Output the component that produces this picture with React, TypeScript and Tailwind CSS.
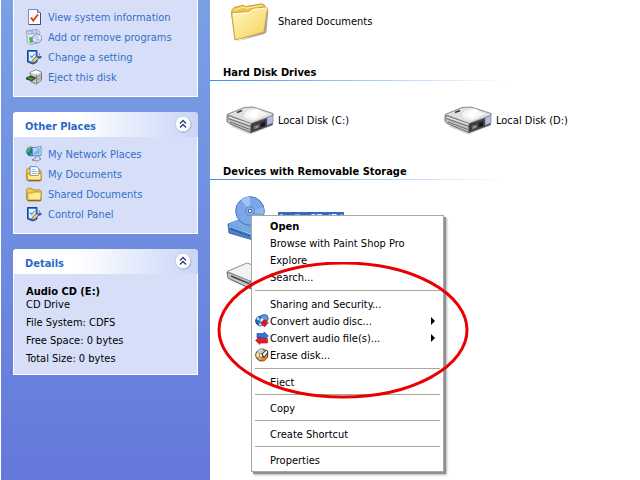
import React from "react";

function CheckPageIcon() {
  return (
    <svg viewBox="0 0 16 16" className="size-4 shrink-0" aria-hidden="true">
      <path d="M2.5.5h9l3 3v12h-12z" fill="#fdfdff" stroke="#6f8fc0" />
      <path d="M14.500 4v11.500H3" fill="none" stroke="#34507f" />
      <path d="M11.500.5v3h3" fill="#c3d3ee" stroke="#5f7fb0" />
      <path d="M5 8.500l2.200 3L12 5.500" fill="none" stroke="#e8401c" strokeWidth="2" />
    </svg>
  );
}

function ProgramsIcon() {
  return (
    <svg viewBox="0 0 16 16" className="size-4 shrink-0" aria-hidden="true">
      <path d="M.5 2L11 .5 14 3l-2 11-8 1.500L1.500 13z" fill="#dfe7f4" stroke="#90a4c6" />
      <path d="M1.500 2.500L11 1.500l1 3-9.500 1z" fill="#8fb2e4" />
      <path d="M3 3.500h2M7 3h3" stroke="#fff" />
      <path d="M3 8.500L7 8v5.500L4 14z" fill="#52ad4d" />
      <circle cx="11" cy="9.500" r="4.500" fill="#cdd6f2" stroke="#8492b8" />
      <path d="M11 9.500L14 6.500a4 4 0 0 1 1 3zM11 9.500l-3 3-1-3z" fill="#f4f8ff" />
      <circle cx="11" cy="9.500" r="1.300" fill="#fff" stroke="#8998c4" strokeWidth=".7" />
    </svg>
  );
}

function SettingIcon() {
  return (
    <svg viewBox="0 0 16 16" className="size-4 shrink-0" aria-hidden="true">
      <path d="M1.500 1.500h9.500v11.500l-4 2-5.500-2z" fill="#3f80d4" stroke="#1c4587" />
      <path d="M3 3h6.500v9L7 13l-4-1.500z" fill="#e9f3ff" />
      <path d="M4 6.500l1.700 2L8.500 5" fill="none" stroke="#5c93d6" strokeWidth="1.200" />
      <path d="M6 12.500l1.500-2.700L11 7.500l2 1.500-3.500 3.500-3 1.500z" fill="#f3c66a" stroke="#3f4f78" strokeWidth=".7" />
      <path d="M11 7.500l4.500-.8v2.300L12.500 10z" fill="#2b62b8" />
      <path d="M13.500 4.500v2" stroke="#d1603a" />
    </svg>
  );
}

function EjectIcon() {
  return (
    <svg viewBox="0 0 16 16" className="size-4 shrink-0" aria-hidden="true">
      <path d="M4 3.500L10 .8l5.500 2.400v8L10.500 15 5 13z" fill="#c9c9c7" stroke="#666" strokeWidth=".8" />
      <path d="M4.500 3.500L10 1.300l5 2.200-4.500 2z" fill="#fff" />
      <path d="M10.500 5.500v9M10.500 8.500l5-3M10.500 11.500l5-3M5 7l5.500 2" fill="none" stroke="#777" strokeWidth=".8" />
      <path d="M0 8.500L5 6.500l5.500 2.500L6 12.200 0 10.500z" fill="#3c403c" />
      <path d="M1 9.300l4.500 1.600 2.500-1.400-4-1.600z" fill="#3ea33b" />
    </svg>
  );
}

function NetworkIcon() {
  return (
    <svg viewBox="0 0 16 16" className="size-4 shrink-0" aria-hidden="true">
      <circle cx="5" cy="5.500" r="4.800" fill="#2465c2" />
      <path d="M1 3c2-3 4-3 5-2L4 4 3 7 1 6zM4 7l3 1-2 3z" fill="#53b646" />
      <path d="M6 2l9-1.500v9L7 10z" fill="#e5edf8" stroke="#56719f" strokeWidth=".8" />
      <path d="M7.300 3l6.400-1v6.300l-5.900.5z" fill="#69b9f4" />
      <path d="M8 3.400l4-.7-3.800 4z" fill="#bce6ff" />
      <path d="M10 10l3-.3.4 2.200 1.600 1.200-4 2-5-1.200 3.500-1.500z" fill="#d7dfee" stroke="#5f6e8d" strokeWidth=".7" />
    </svg>
  );
}

function SmallFolder({ page = false }: { page?: boolean }) {
  return (
    <svg viewBox="0 0 16 16" className="size-4 shrink-0" aria-hidden="true">
      <path d="M.6 13.500V3.500l1-1.200h4l1.400 1.600h7l1 1v9l-1 .9H1.600z" fill="#f3c94f" stroke="#b58a2c" strokeWidth=".9" />
      {page && (
        <>
          <path d="M4 .7h6.500L13 3v8H4z" fill="#fff" stroke="#4d83c2" strokeWidth=".9" />
          <path d="M5.500 3.500h4M5.500 5.500h6M5.500 7.500h6" stroke="#8fb8e6" />
        </>
      )}
      <path
        d={page ? "M1 7.500h2l1 2h8l1-2h2v6.500H1.600z" : "M2 14l-.4-7h5l1.200-1H15l.3 1-.8 7z"}
        fill="#ffe992"
        stroke="#b3851f"
        strokeWidth=".8"
      />
      <path d="M2 14.700h12.700l.7-1" fill="none" stroke="#6e5214" strokeWidth=".8" />
    </svg>
  );
}

function FolderIcon() {
  return (
    <svg viewBox="0 0 48 42" className="h-[42px] w-12 shrink-0" aria-hidden="true">
      <defs>
        <linearGradient id="folderFront" x1="0" y1="0" x2="1" y2="1">
          <stop offset="0" stopColor="#fffabf" />
          <stop offset="1" stopColor="#f6cf5c" />
        </linearGradient>
      </defs>
      <path d="M10 41.500l28.500-7.500 2-2 2-22-2 2-3 20z" fill="#8f8d89" opacity=".75" />
      <path d="M5.500 13l.7-3.500L8 7.500l9-2.200 2.500 1.200L36 3.800l2.500 1.500 1 3-2 23.500-28.500 8z" fill="#efc450" stroke="#b88a2a" strokeWidth=".8" />
      <path d="M7.200 10.500L17.500 7l2.500 1.200 16-2.700" fill="none" stroke="#fff2a8" />
      <path d="M9 40L5.800 14l1.400-1.500 15.300-.8 4.500-3.500L40.500 7l1 1.200L38 32z" fill="url(#folderFront)" stroke="#c99a35" strokeWidth=".8" />
      <path d="M7 14l16-1 4.500-3.500L40.500 8" fill="none" stroke="#fffde8" />
    </svg>
  );
}

function DriveIcon() {
  return (
    <svg viewBox="0 0 48 48" className="size-12 shrink-0" aria-hidden="true">
      <path d="M4 30l20 8.500 23-9-3-4z" fill="#77777d" opacity=".35" />
      <path d="M1 19.500l24 8v9L3 27.500l-2-2z" fill="#bfc0c2" stroke="#55565b" strokeWidth=".8" />
      <path d="M25 27.500l21.500-7v8L25 36.500z" fill="#3d3d46" stroke="#4a4b52" strokeWidth=".8" />
      <path d="M41 20l6-2.500v9.500l-6 2.500z" fill="#b8bce4" stroke="#6c6e91" strokeWidth=".6" />
      <path d="M1 18.500L18 11.500l9-.5 20 6.500v1.800L25 27.500z" fill="#dedfdf" stroke="#6f7075" strokeWidth=".8" />
      <path d="M18 18.500c2-5 9-7 17-3.500l7 2.800-13 6c-6 .5-10-1-11-5.300z" fill="#f5f5f5" />
      <path d="M22 19.500l8-7 5 2-6 8z" fill="#fff" />
      <path d="M11 16.500l5-2" stroke="#37373b" strokeWidth="1.400" />
      <path d="M2 22.500l23 8M4 26L24 33.500" stroke="#6d6e74" />
      <path d="M3 21l22 7.500" stroke="#f9f9f9" strokeWidth=".8" />
      <path d="M28 30l5-1.600v3.200l-5 1.800z" fill="#77778a" />
      <path d="M30 31h1.500" stroke="#e09240" strokeWidth="1.500" />
      <path d="M35 27l4-1.300v4l-4 1.300z" fill="#16161b" />
    </svg>
  );
}

function RemovableIcon() {
  return (
    <svg viewBox="0 0 48 48" className="size-12 shrink-0" aria-hidden="true">
      <path d="M3 29l22 9 21-8-4-5z" fill="#77777d" opacity=".35" />
      <path d="M1 21l24 9v8L2 27z" fill="#c6c6c8" stroke="#68686a" />
      <path d="M24 30l22-7v6l-22 8z" fill="#a3a3a5" stroke="#68686a" />
      <path d="M1 20.500L21 12l25 9-22 9z" fill="#f2f2f2" stroke="#8e8e90" />
      <path d="M5 25l18 7.500" stroke="#44454a" strokeWidth="1.500" />
    </svg>
  );
}

function DiscDriveIcon() {
  return (
    <svg viewBox="0 0 48 48" className="size-12 shrink-0" aria-hidden="true">
      <path d="M2 29l11-4 31 9-17 11L3 38z" fill="#4c84cb" stroke="#285592" strokeWidth=".8" />
      <path d="M2 29l11-4 31 9-18 5z" fill="#77a9e4" />
      <path d="M3 31l22 8" stroke="#a8cdf7" />
      <path d="M5 34l18 7" stroke="#244f8d" strokeWidth="1.500" strokeDasharray="2 1" />
      <circle cx="24" cy="16" r="14.300" fill="#7ba6e8" stroke="#4377bf" />
      <path d="M24 16L15 5a14 14 0 0 1 9-3.300zM24 16l9.500 10a14 14 0 0 1-8 4z" fill="#9fc3f5" />
      <path d="M24 16l13.500-3.500a14 14 0 0 1 0 7z" fill="#8fb7f0" />
      <circle cx="24" cy="16" r="4.300" fill="#8db5ee" stroke="#527fc5" />
      <circle cx="24" cy="16" r="1.800" fill="#fff" stroke="#295697" />
    </svg>
  );
}

function ConvertDiscIcon() {
  return (
    <svg viewBox="0 0 14 14" className="size-[14px]" aria-hidden="true">
      <circle cx="5.500" cy="7" r="4.800" fill="#2471bb" stroke="#163c6d" />
      <path d="M5.500 7L1 5l2.500-2.500zM5.500 7l2 4.500h-4z" fill="#a5d9ff" />
      <circle cx="9.300" cy="4.500" r="3.900" fill="#5c9ce0" stroke="#1e4b86" strokeWidth=".8" />
      <circle cx="7" cy="6" r="1.500" fill="#fff" />
      <path d="M8 6h3v2.500h2.500L9.500 13 5.500 8.500H8z" fill="#e9131d" stroke="#a80c18" strokeWidth=".5" />
    </svg>
  );
}

function ConvertFilesIcon() {
  return (
    <svg viewBox="0 0 14 14" className="size-[14px]" aria-hidden="true">
      <path d="M2 2.500h7V1l4.500 4L9 8.500V7H2z" fill="#2f74e2" stroke="#153e94" strokeWidth=".6" />
      <path d="M12.500 7.500H5v-2L.5 9.500 5 13.500V12h7.500z" fill="#e21b26" stroke="#9c1220" strokeWidth=".6" />
    </svg>
  );
}

function EraseIcon() {
  return (
    <svg viewBox="0 0 14 14" className="size-[14px]" aria-hidden="true">
      <circle cx="6.800" cy="7" r="6" fill="#e9ad55" stroke="#3c2c1e" />
      <path d="M7 7L2 3A6 6 0 0 1 8 1.200z" fill="#a8d9ee" />
      <path d="M7 7L1.500 5v4z" fill="#fff1bd" />
      <path d="M7 7l5.500 2A6 6 0 0 1 6 12.500z" fill="#ea8226" />
      <circle cx="6" cy="7.500" r="1.800" fill="#fff" stroke="#745838" strokeWidth=".7" />
      <path d="M7 6l2 3.500L13 4l-1.500-2z" fill="#fff" stroke="#222" />
    </svg>
  );
}

function CollapseButton({ label }: { label: string }) {
  return (
    <button aria-label={label} className="mb-[2px] size-[18px] shrink-0">
      <svg viewBox="0 0 18 18" className="size-[18px]" aria-hidden="true">
        <circle cx="9.500" cy="9.700" r="8" fill="#9aa6cb" />
        <circle cx="9" cy="9" r="7.700" fill="#fff" stroke="#c3cce6" strokeWidth=".8" />
        <path d="M6 8.500l3-3 3 3M6 12.500l3-3 3 3" fill="none" stroke="#24407e" strokeWidth="1.400" />
      </svg>
    </button>
  );
}

function PanelHeader({ title }: { title: string }) {
  return (
    <header className="flex h-[25px] items-center justify-between rounded-t-[3px] bg-linear-to-r from-white from-35% to-[#c8d5f7] pr-[6px] pl-3">
      <h2 className="pt-[3px] font-bold text-[#2a6acb]">{title}</h2>
      <CollapseButton label={"Collapse " + title} />
    </header>
  );
}

function TaskLink({ icon, children }: { icon: React.ReactNode; children: string }) {
  return (
    <li>
      <a href="#" className="flex h-5 items-center gap-[6px] text-[#346fcb]">
        {icon}
        <span>{children}</span>
      </a>
    </li>
  );
}

function GroupHeading({ children }: { children: string }) {
  return (
    <>
      <h2 className="pt-px pl-[13px] leading-[15px] font-bold">{children}</h2>
      <div className="h-px w-[296px] bg-linear-to-r from-[#3f8cf0] to-white" />
    </>
  );
}

function Item({ icon, label }: { icon: React.ReactNode; label?: React.ReactNode }) {
  return (
    <div className="flex items-center gap-1">
      {icon}
      {label && <span>{label}</span>}
    </div>
  );
}

type MenuItemProps = { icon?: React.ReactNode; children: string; bold?: boolean; submenu?: boolean };

function MenuItem({ icon, children, bold, submenu }: MenuItemProps) {
  return (
    <button role="menuitem" className="flex h-[17px] w-full items-center pr-2 pl-[3px] text-left">
      <span className="flex w-[15px] shrink-0 pt-px">{icon}</span>
      <span className={bold ? "flex-1 pt-[2px] font-bold" : "flex-1 pt-[2px]"}>{children}</span>
      {submenu && (
        <svg viewBox="0 0 4 8" className="h-2 w-1" aria-hidden="true">
          <path d="M0 0l4 4-4 4z" />
        </svg>
      )}
    </button>
  );
}

function Separator() {
  return <hr className="mx-[3px] my-1 border-t border-[#aca899]" />;
}

function ContextMenu() {
  return (
    <div
      role="menu"
      className="absolute top-[215px] left-[251px] w-[193px] border border-[#aca899] bg-white pt-px pb-[3px] shadow-[2px_2px_0_#8e8e98,3px_3px_2px_#b4b4bc]"
    >
      <div className="pb-px">
        <MenuItem bold>Open</MenuItem>
        <MenuItem>Browse with Paint Shop Pro</MenuItem>
        <MenuItem>Explore</MenuItem>
        <MenuItem>Search...</MenuItem>
      </div>
      <Separator />
      <div className="pb-px">
        <MenuItem>Sharing and Security...</MenuItem>
        <MenuItem icon={<ConvertDiscIcon />} submenu>Convert audio disc...</MenuItem>
        <MenuItem icon={<ConvertFilesIcon />} submenu>Convert audio file(s)...</MenuItem>
        <MenuItem icon={<EraseIcon />}>Erase disk...</MenuItem>
      </div>
      <Separator />
      <MenuItem>Eject</MenuItem>
      <Separator />
      <MenuItem>Copy</MenuItem>
      <Separator />
      <MenuItem>Create Shortcut</MenuItem>
      <Separator />
      <MenuItem>Properties</MenuItem>
    </div>
  );
}

export default function App() {
  return (
    <div className="relative flex min-h-screen overflow-hidden bg-white pl-px font-['Tahoma','DejaVu_Sans_Condensed','DejaVu_Sans',sans-serif] text-[11px] leading-[13px] text-black">
      <aside className="flex w-[209px] shrink-0 flex-col gap-[15px] bg-linear-to-b from-[#7aa0e6] to-[#6478db] px-3">
        <section className="border border-t-0 border-white bg-[#d6dff7] pt-[7px] pb-[9px] pl-3">
          <ul>
            <TaskLink icon={<CheckPageIcon />}>View system information</TaskLink>
            <TaskLink icon={<ProgramsIcon />}>Add or remove programs</TaskLink>
            <TaskLink icon={<SettingIcon />}>Change a setting</TaskLink>
            <TaskLink icon={<EjectIcon />}>Eject this disk</TaskLink>
          </ul>
        </section>
        <section>
          <PanelHeader title="Other Places" />
          <ul className="border border-t-0 border-white bg-[#d6dff7] pt-[7px] pb-[9px] pl-3">
            <TaskLink icon={<NetworkIcon />}>My Network Places</TaskLink>
            <TaskLink icon={<SmallFolder page />}>My Documents</TaskLink>
            <TaskLink icon={<SmallFolder />}>Shared Documents</TaskLink>
            <TaskLink icon={<SettingIcon />}>Control Panel</TaskLink>
          </ul>
        </section>
        <section>
          <PanelHeader title="Details" />
          <div className="border border-t-0 border-white bg-[#d6dff7] pt-[11px] pb-[6px] pl-3">
            <p className="font-bold">Audio CD (E:)</p>
            <p className="mb-[3px]">CD Drive</p>
            <p className="leading-[18px]">File System: CDFS</p>
            <p className="leading-[18px]">Free Space: 0 bytes</p>
            <p className="leading-[18px]">Total Size: 0 bytes</p>
          </div>
        </section>
      </aside>

      <main className="min-w-0 flex-1">
        <div className="pl-4">
          <Item icon={<FolderIcon />} label="Shared Documents" />
        </div>
        <section className="mt-[22px]">
          <GroupHeading>Hard Disk Drives</GroupHeading>
          <div className="grid grid-cols-[218px_1fr] pt-[15px] pl-4">
            <Item icon={<DriveIcon />} label="Local Disk (C:)" />
            <Item icon={<DriveIcon />} label="Local Disk (D:)" />
          </div>
        </section>
        <section className="mt-[19px]">
          <GroupHeading>Devices with Removable Storage</GroupHeading>
          <div className="flex flex-col gap-2 pt-[15px] pl-4">
            <Item
              icon={<DiscDriveIcon />}
              label={<span className="block bg-[#316ac5] pb-[2px] text-white">Audio CD (E:)</span>}
            />
            <Item icon={<RemovableIcon />} />
          </div>
        </section>
      </main>

      <ContextMenu />
      <svg
        viewBox="0 0 252 138"
        className="pointer-events-none absolute top-[262px] left-[217px] h-[138px] w-[252px]"
        aria-hidden="true"
      >
        <ellipse cx="126" cy="68" rx="124" ry="67" fill="none" stroke="#ea0000" strokeWidth="3" />
      </svg>
    </div>
  );
}
